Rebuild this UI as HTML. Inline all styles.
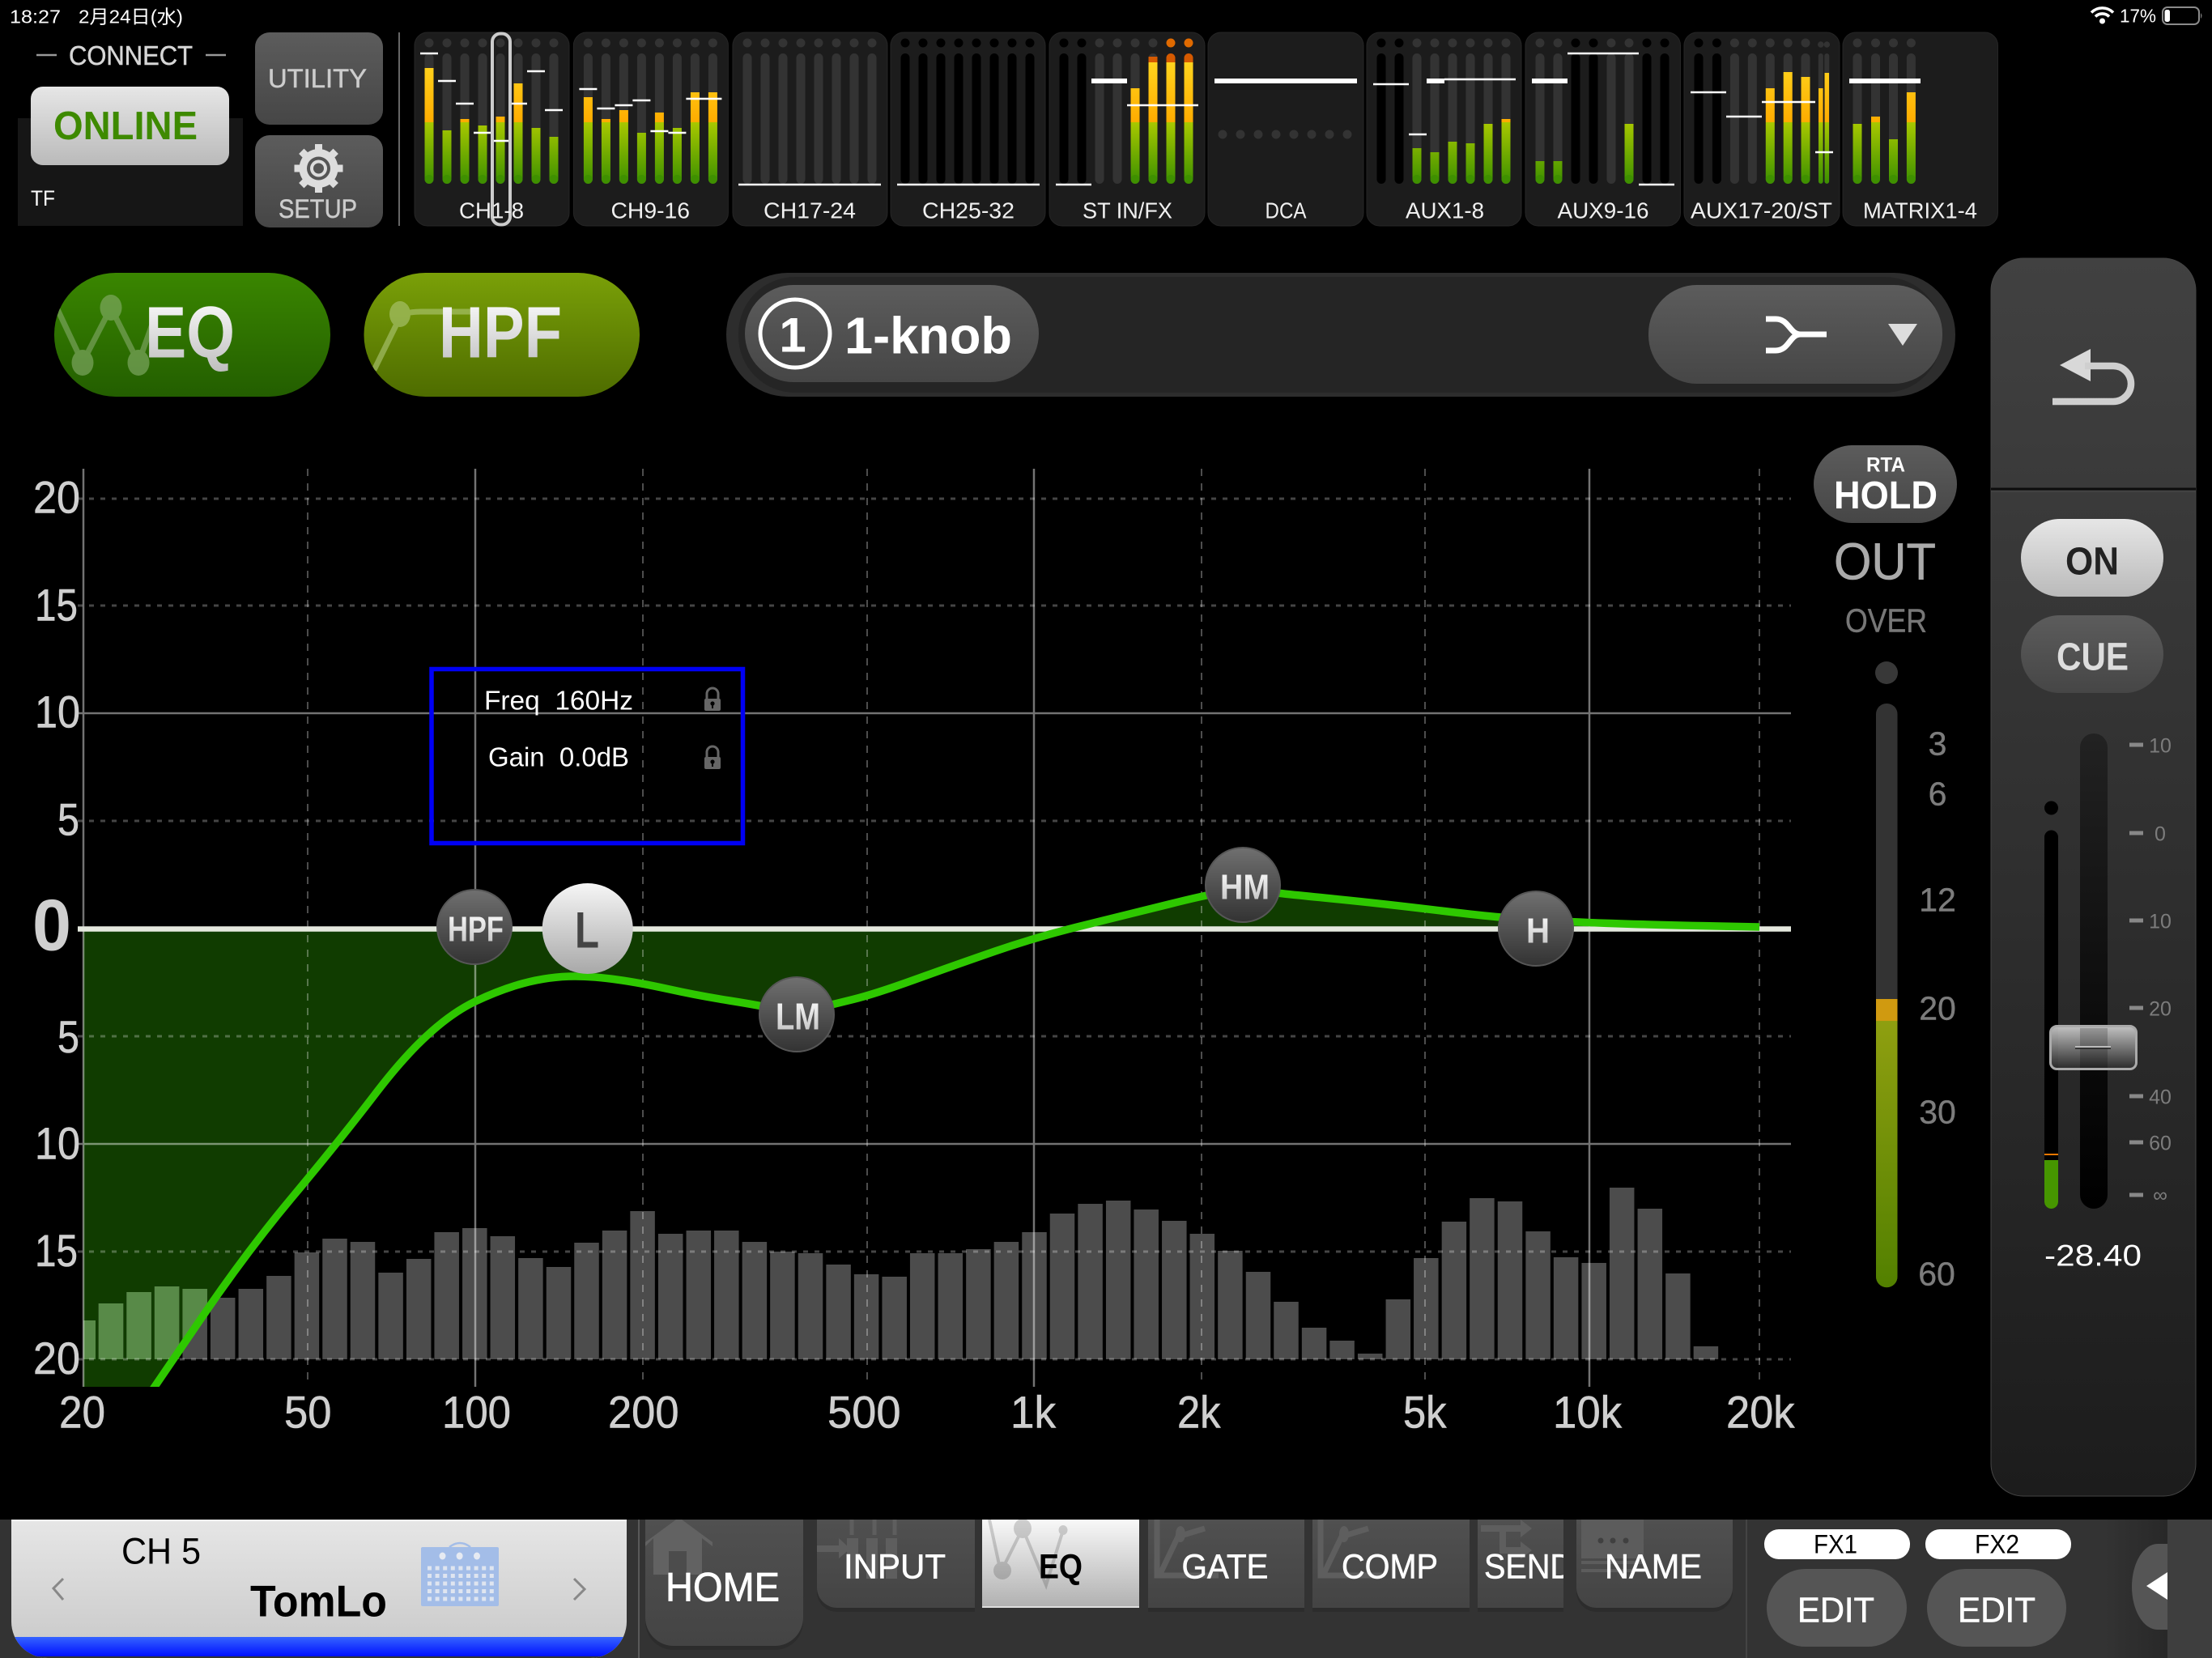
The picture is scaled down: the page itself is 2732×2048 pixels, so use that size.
<!DOCTYPE html>
<html><head><meta charset="utf-8"><title>TF Editor EQ</title>
<style>
html,body{margin:0;padding:0;background:#000;width:2732px;height:2048px;overflow:hidden}
svg{display:block}
text{font-family:"Liberation Sans","Noto Sans CJK JP",sans-serif;transform:translate(-1px,-1.5px)}
.b{font-weight:bold}
.tk{stroke-width:11;stroke-linecap:round;fill:none}
.ms{stroke-width:11;fill:none}
.f{stroke:#fff;stroke-width:2.4;fill:none}
.F{stroke:#fff;stroke-width:6;fill:none}
.pn{fill:#1c1c1c;stroke:#262626;stroke-width:1}
</style></head><body>
<svg xmlns="http://www.w3.org/2000/svg" width="2732" height="2048" viewBox="0 0 2732 2048">
<defs>
<linearGradient id="g" gradientUnits="userSpaceOnUse" x1="0" y1="151" x2="0" y2="227"><stop offset="0" stop-color="#a8c800"/><stop offset="1" stop-color="#3c9000"/></linearGradient>
<linearGradient id="y" gradientUnits="userSpaceOnUse" x1="0" y1="70" x2="0" y2="151"><stop offset="0" stop-color="#ffd820"/><stop offset="1" stop-color="#ffac00"/></linearGradient>
<linearGradient id="gb" x1="0" y1="0" x2="0" y2="1"><stop offset="0" stop-color="#5c5c5c"/><stop offset="1" stop-color="#464646"/></linearGradient>
<linearGradient id="lb" x1="0" y1="0" x2="0" y2="1"><stop offset="0" stop-color="#e6e6e6"/><stop offset="1" stop-color="#bababa"/></linearGradient>
<linearGradient id="eqb" x1="0" y1="0" x2="0" y2="1"><stop offset="0" stop-color="#3a8600"/><stop offset="1" stop-color="#235e00"/></linearGradient>
<linearGradient id="hpb" x1="0" y1="0" x2="0" y2="1"><stop offset="0" stop-color="#7aa008"/><stop offset="1" stop-color="#4e6c00"/></linearGradient>
<linearGradient id="wt" x1="0" y1="0" x2="0" y2="1"><stop offset="0" stop-color="#fff"/><stop offset="1" stop-color="#bdbdbd"/></linearGradient>
<linearGradient id="nd" x1="0" y1="0" x2="0" y2="1"><stop offset="0" stop-color="#707070"/><stop offset="1" stop-color="#333"/></linearGradient>
<linearGradient id="ln" x1="0" y1="0" x2="0" y2="1"><stop offset="0" stop-color="#f6f6f6"/><stop offset="1" stop-color="#a8a8a8"/></linearGradient>
<linearGradient id="pnl" gradientUnits="userSpaceOnUse" x1="0" y1="319" x2="0" y2="1848"><stop offset="0" stop-color="#414141"/><stop offset="1" stop-color="#1c1c1c"/></linearGradient>
<linearGradient id="ov" x1="0" y1="0" x2="0" y2="1"><stop offset="0" stop-color="#8f9f10"/><stop offset="1" stop-color="#528000"/></linearGradient>
<linearGradient id="ft" x1="0" y1="0" x2="0" y2="1"><stop offset="0" stop-color="#222"/><stop offset=".45" stop-color="#111"/><stop offset="1" stop-color="#000"/></linearGradient>
<linearGradient id="kn" x1="0" y1="0" x2="0" y2="1"><stop offset="0" stop-color="#cfcfcf"/><stop offset="1" stop-color="#2a2a2a"/></linearGradient>
<linearGradient id="wp" x1="0" y1="0" x2="0" y2="1"><stop offset="0" stop-color="#e6e6e6"/><stop offset="1" stop-color="#c8c8c8"/></linearGradient>
<linearGradient id="bl" x1="0" y1="0" x2="0" y2="1"><stop offset="0" stop-color="#3564ff"/><stop offset="1" stop-color="#0010ff"/></linearGradient>
<linearGradient id="tb" x1="0" y1="0" x2="0" y2="1"><stop offset="0" stop-color="#505050"/><stop offset="1" stop-color="#444"/></linearGradient>
<linearGradient id="eqt" x1="0" y1="0" x2="0" y2="1"><stop offset="0" stop-color="#f8f8f8"/><stop offset="1" stop-color="#b0b0b0"/></linearGradient>
<linearGradient id="sh" x1="0" y1="0" x2="1" y2="0"><stop offset="0" stop-color="#333"/><stop offset="1" stop-color="#282828"/></linearGradient>
<clipPath id="cf"><path d="M103 1147V1713H191L247.500 1630Q304 1547 360 1480Q416 1413 459.500 1356.500C490 1316 535 1262 587 1237C625 1219 665 1206 710 1206C745 1206 786 1213 824.500 1221.500Q863 1230 901 1236Q939 1242 961 1247Q983 1252 1005 1246.500Q1027 1241 1053.500 1234.500Q1080 1228 1128.500 1210.500Q1177 1193 1229 1175Q1281 1157 1340.500 1142.500Q1400 1128 1443.500 1117Q1487 1106 1511 1102Q1535 1098 1559.500 1101Q1584 1104 1645 1110Q1706 1116 1780 1125Q1854 1134 1898.500 1136.500Q1943 1139 2003 1141Q2063 1143 2173 1145V1147Z"/></clipPath>
<clipPath id="cb"><rect x="0" y="500" width="2300" height="1213"/></clipPath>
<clipPath id="ce"><rect x="67" y="337" width="341" height="153" rx="76"/></clipPath>
<clipPath id="ch"><rect x="449.5" y="337" width="340.5" height="153" rx="76"/></clipPath>
<clipPath id="cw"><path d="M14 1877H774V2003A45 45 0 0 1 729 2048H59A45 45 0 0 1 14 2003Z"/></clipPath>
<clipPath id="cs"><rect x="1825" y="1877" width="106" height="120"/></clipPath>
</defs>

<rect width="2732" height="2048" fill="#000"/>

<!-- status -->
<text x="13" y="30" font-size="23" fill="#fff" textLength="63" lengthAdjust="spacingAndGlyphs">18:27</text>
<text x="98" y="30" font-size="23" fill="#fff" textLength="129" lengthAdjust="spacingAndGlyphs">2月24日(水)</text>
<path d="M2583 15.500A19 19 0 0 1 2610 15.500M2588 20.500A12 12 0 0 1 2605 20.500" stroke="#fff" stroke-width="3.600" fill="none"/><circle cx="2596.500" cy="26" r="3.500" fill="#fff"/>
<text x="2619" y="29" font-size="23" fill="#fff" textLength="45" lengthAdjust="spacingAndGlyphs">17%</text>
<rect x="2671" y="9" width="45" height="21" rx="6" fill="none" stroke="#8a8a8a" stroke-width="2"/><rect x="2673.500" y="12" width="6.500" height="15" rx="2.500" fill="#fff"/><path d="M2718 16q3 3.500 0 7z" fill="#777"/>

<!-- connect -->
<path d="M45 68H70M254 68H279" stroke="#999" stroke-width="2.500"/>
<text x="86" y="81.500" font-size="33" fill="#d6d6d6" stroke="#d6d6d6" stroke-width=".5" textLength="153" lengthAdjust="spacingAndGlyphs">CONNECT</text>
<rect x="22" y="146" width="278" height="133" fill="#161616"/>
<rect x="38" y="107" width="245" height="97" rx="15" fill="url(#lb)"/>
<text x="67" y="173.500" font-size="49" class="b" fill="#3e8a00" textLength="178" lengthAdjust="spacingAndGlyphs">ONLINE</text>
<text x="39" y="255.500" font-size="27" fill="#fff" textLength="30" lengthAdjust="spacingAndGlyphs">TF</text>

<rect x="315" y="40" width="158" height="114" rx="18" fill="url(#gb)"/>
<text x="332" y="109.500" font-size="32" fill="#ccc" stroke="#ccc" stroke-width=".5" textLength="122" lengthAdjust="spacingAndGlyphs">UTILITY</text>
<rect x="315" y="167" width="158" height="114" rx="18" fill="url(#gb)"/>
<g fill="#ddd"><circle cx="393.500" cy="208" r="24"/>
<g stroke="#ddd" stroke-width="9"><path d="M393.500 178V238M363.500 208H423.500M372.300 186.800L414.700 229.200M414.700 186.800L372.300 229.200"/></g></g>
<circle cx="393.500" cy="208" r="14.500" fill="#555"/><circle cx="393.500" cy="208" r="10.500" fill="#ddd"/><circle cx="393.500" cy="208" r="6.500" fill="#555"/>
<text x="345" y="270.500" font-size="32" fill="#ccc" stroke="#ccc" stroke-width=".5" textLength="97" lengthAdjust="spacingAndGlyphs">SETUP</text>
<path d="M493 40V279" stroke="#666" stroke-width="2"/>

<!-- CH1-8 -->
<g transform="translate(512 0)"><rect width="191" y="40" height="239" rx="16" class="pn"/>
<path class="tk" stroke="#333" d="M18 53h0M40 53h0M62 53h0M84 53h0M106 53h0M128 53h0M150 53h0M172 53h0M18 71.500V221.500M40 71.500V221.500M62 71.500V221.500M84 71.500V221.500M106 71.500V221.500M128 71.500V221.500M150 71.500V221.500M172 71.500V221.500"/>
<path class="ms" stroke="url(#g)" d="M18 151V221.500M40 161V221.500M62 151V221.500M84 155V221.500M106 151V221.500M128 151V221.500M150 158V221.500M172 169V221.500"/>
<path class="tk" stroke="#3f9000" d="M18 221.500h0M40 221.500h0M62 221.500h0M84 221.500h0M106 221.500h0M128 221.500h0M150 221.500h0M172 221.500h0"/>
<path class="ms" stroke="url(#y)" d="M18 84V151M62 147V151M106 144V151M128 103V151"/>
<path class="f" d="M7 66h22M29 100h22M51 128h22M73 164h22M95 174h22M117 128h22M139 88h22M161 136h22"/></g>
<!-- CH9-16 -->
<g transform="translate(708.400 0)"><rect width="191" y="40" height="239" rx="16" class="pn"/>
<path class="tk" stroke="#333" d="M18 53h0M40 53h0M62 53h0M84 53h0M106 53h0M128 53h0M150 53h0M172 53h0M18 71.500V221.500M40 71.500V221.500M62 71.500V221.500M84 71.500V221.500M106 71.500V221.500M128 71.500V221.500M150 71.500V221.500M172 71.500V221.500"/>
<path class="ms" stroke="url(#g)" d="M18 151V221.500M40 151V221.500M62 151V221.500M84 164V221.500M106 151V221.500M128 158V221.500M150 151V221.500M172 151V221.500"/>
<path class="tk" stroke="#3f9000" d="M18 221.500h0M40 221.500h0M62 221.500h0M84 221.500h0M106 221.500h0M128 221.500h0M150 221.500h0M172 221.500h0"/>
<path class="ms" stroke="url(#y)" d="M18 120V151M40 147V151M62 136V151M106 139V151M150 114V151M172 114V151"/>
<path class="f" d="M7 110h22M29 134h22M51 130h22M73 124h22M95 162h22M117 164h22M139 122h44"/></g>
<!-- CH17-24 -->
<g transform="translate(905 0)"><rect width="191" y="40" height="239" rx="16" class="pn"/>
<path class="tk" stroke="#333" d="M18 53h0M40 53h0M62 53h0M84 53h0M106 53h0M128 53h0M150 53h0M172 53h0M18 71.500V221.500M40 71.500V221.500M62 71.500V221.500M84 71.500V221.500M106 71.500V221.500M128 71.500V221.500M150 71.500V221.500M172 71.500V221.500"/>
<path class="f" d="M7 228h176"/></g>
<!-- CH25-32 -->
<g transform="translate(1100 0)"><rect width="191" y="40" height="239" rx="16" class="pn"/>
<path class="tk" stroke="#000" d="M18 53h0M40 53h0M62 53h0M84 53h0M106 53h0M128 53h0M150 53h0M172 53h0M18 71.500V221.500M40 71.500V221.500M62 71.500V221.500M84 71.500V221.500M106 71.500V221.500M128 71.500V221.500M150 71.500V221.500M172 71.500V221.500"/>
<path class="f" d="M8 228h176"/></g>
<!-- ST IN/FX -->
<g transform="translate(1296 0)"><rect width="192" y="40" height="239" rx="16" class="pn"/>
<path class="tk" stroke="#000" d="M18 53h0M40 53h0M18 71.500V221.500M40 71.500V221.500"/>
<path class="tk" stroke="#333" d="M62 53h0M84 53h0M106 53h0M128 53h0M62 71.500V221.500M84 71.500V221.500M106 71.500V221.500M128 71.500V221.500"/>
<path class="tk" stroke="#e06a00" d="M150 53h0M172 53h0"/>
<path class="ms" stroke="url(#g)" d="M106 151V221.500M128 151V221.500M150 151V221.500M172 151V221.500"/>
<path class="tk" stroke="#3f9000" d="M106 221.500h0M128 221.500h0M150 221.500h0M172 221.500h0"/>
<path class="ms" stroke="url(#y)" d="M106 109V151M128 77V151M150 77V151M172 77V151"/>
<path class="ms" stroke="#d65a00" d="M128 70V77M150 71V77M172 71V77"/>
<path class="tk" stroke="#d65a00" d="M150 71.500h0M172 71.500h0"/>
<path class="f" d="M8 228h44M96 130h88"/><path class="F" d="M52 100h44"/></g>
<!-- DCA -->
<g transform="translate(1492 0)"><rect width="192" y="40" height="239" rx="16" class="pn"/>
<path class="tk" stroke="#333" d="M18 166h0M40 166h0M62 166h0M84 166h0M106 166h0M128 166h0M150 166h0M172 166h0"/>
<path class="F" d="M8 100h176"/></g>
<!-- AUX1-8 -->
<g transform="translate(1688 0)"><rect width="191" y="40" height="239" rx="16" class="pn"/>
<path class="tk" stroke="#000" d="M18 53h0M40 53h0M18 71.500V221.500M40 71.500V221.500"/>
<path class="tk" stroke="#333" d="M62 53h0M84 53h0M106 53h0M128 53h0M150 53h0M172 53h0M62 71.500V221.500M84 71.500V221.500M106 71.500V221.500M128 71.500V221.500M150 71.500V221.500M172 71.500V221.500"/>
<path class="ms" stroke="url(#g)" d="M62 183V221.500M84 188V221.500M106 175V221.500M128 177V221.500M150 153V221.500M172 151V221.500"/>
<path class="tk" stroke="#3f9000" d="M62 221.500h0M84 221.500h0M106 221.500h0M128 221.500h0M150 221.500h0M172 221.500h0"/>
<path class="ms" stroke="url(#y)" d="M172 147V151"/>
<path class="f" d="M8 104h44M52 166h22M96 98h88"/><path class="F" d="M74 100h22"/></g>
<!-- AUX9-16 -->
<g transform="translate(1884 0)"><rect width="191.500" y="40" height="239" rx="16" class="pn"/>
<path class="tk" stroke="#000" d="M62 53h0M84 53h0M150 53h0M172 53h0M62 71.500V221.500M84 71.500V221.500M150 71.500V221.500M172 71.500V221.500"/>
<path class="tk" stroke="#333" d="M18 53h0M40 53h0M106 53h0M128 53h0M18 71.500V221.500M40 71.500V221.500M106 71.500V221.500M128 71.500V221.500"/>
<path class="ms" stroke="url(#g)" d="M18 199V221.500M40 199V221.500M128 153V221.500"/>
<path class="tk" stroke="#3f9000" d="M18 221.500h0M40 221.500h0M128 221.500h0"/>
<path class="f" d="M52 66h88M140 228h44"/><path class="F" d="M8 100h44"/></g>
<!-- AUX17-20/ST -->
<g transform="translate(2080 0)"><rect width="192" y="40" height="239" rx="16" class="pn"/>
<path class="tk" stroke="#000" d="M18 53h0M40.400 53h0M18 71.500V221.500M40.400 71.500V221.500"/>
<path class="tk" stroke="#333" d="M62.400 53h0M84.300 53h0M106.300 53h0M128.200 53h0M150 53h0M62.400 71.500V221.500M84.300 71.500V221.500M106.300 71.500V221.500M128.200 71.500V221.500M150 71.500V221.500"/>
<path stroke="#333" stroke-width="6" stroke-linecap="round" fill="none" d="M168.800 69V224M176.300 69V224"/>
<path stroke="#333" stroke-width="7.500" stroke-linecap="round" fill="none" d="M168.800 55h0M176.300 55h0"/>
<path class="ms" stroke="url(#g)" d="M106.300 151V221.500M128.200 151V221.500M150 151V221.500"/>
<path class="tk" stroke="#3f9000" d="M106.300 221.500h0M128.200 221.500h0M150 221.500h0"/>
<path stroke="url(#g)" stroke-width="5.500" fill="none" stroke-linecap="round" d="M168.800 151V224M176.300 151V224"/>
<path class="ms" stroke="url(#y)" d="M106.300 109V151M128.200 89V151M150 95V151"/>
<path stroke="url(#y)" stroke-width="5.500" fill="none" d="M168.800 109V151M176.300 90V151"/>
<path class="f" d="M8 114h44M52 144h44M96 126h66M162 188h22"/></g>
<!-- MATRIX -->
<g transform="translate(2276 0)"><rect width="191.500" y="40" height="239" rx="16" class="pn"/>
<path class="tk" stroke="#333" d="M18 53h0M40.500 53h0M62.500 53h0M84.400 53h0M18 71.500V221.500M40.500 71.500V221.500M62.500 71.500V221.500M84.400 71.500V221.500"/>
<path class="ms" stroke="url(#g)" d="M18 153V221.500M40.500 151V221.500M62.500 172V221.500M84.400 151V221.500"/>
<path class="tk" stroke="#3f9000" d="M18 221.500h0M40.500 221.500h0M62.500 221.500h0M84.400 221.500h0"/>
<path class="ms" stroke="url(#y)" d="M40.500 144V151M84.400 114V151"/>
<path class="F" d="M8 100h88"/></g>
<rect x="608" y="41.500" width="22" height="236" rx="10" fill="none" stroke="#ccc" stroke-width="4"/>

<g font-size="28" fill="#f0f0f0">
<text x="568" y="271" textLength="80" lengthAdjust="spacingAndGlyphs">CH1-8</text>
<text x="755.500" y="271" textLength="97.500" lengthAdjust="spacingAndGlyphs">CH9-16</text>
<text x="944" y="271" textLength="114" lengthAdjust="spacingAndGlyphs">CH17-24</text>
<text x="1140" y="271" textLength="114" lengthAdjust="spacingAndGlyphs">CH25-32</text>
<text x="1338" y="271" textLength="111" lengthAdjust="spacingAndGlyphs">ST IN/FX</text>
<text x="1563.500" y="271" textLength="51" lengthAdjust="spacingAndGlyphs">DCA</text>
<text x="1737" y="271" textLength="97" lengthAdjust="spacingAndGlyphs">AUX1-8</text>
<text x="1924.500" y="271" textLength="113" lengthAdjust="spacingAndGlyphs">AUX9-16</text>
<text x="2089" y="271" textLength="175" lengthAdjust="spacingAndGlyphs">AUX17-20/ST</text>
<text x="2302" y="271" textLength="141" lengthAdjust="spacingAndGlyphs">MATRIX1-4</text>
</g>

<!-- EQ / HPF buttons -->
<rect x="67" y="337" width="341" height="153" rx="76" fill="url(#eqb)"/>
<g clip-path="url(#ce)" fill="#8ab070" opacity=".6"><path d="M70 380L102 448L137 380L171 448L190 395" stroke="#86aa6c" stroke-width="7" fill="none"/><ellipse cx="102" cy="448" rx="13.500" ry="16"/><ellipse cx="137" cy="380" rx="13.500" ry="16"/><ellipse cx="171" cy="448" rx="13.500" ry="16"/></g>
<text x="180" y="443" font-size="90" class="b" fill="url(#wt)" textLength="111" lengthAdjust="spacingAndGlyphs">EQ</text>
<rect x="449.500" y="337" width="340.500" height="153" rx="76" fill="url(#hpb)"/>
<g clip-path="url(#ch)" opacity=".6"><path d="M462 457L494 392Q500 385 520 385H585" stroke="#b0c878" stroke-width="7" fill="none"/><ellipse cx="494" cy="388" rx="13" ry="16" fill="#b0c878"/></g>
<text x="543" y="443" font-size="90" class="b" fill="url(#wt)" textLength="152" lengthAdjust="spacingAndGlyphs">HPF</text>

<!-- 1-knob bar -->
<rect x="897" y="337" width="1518" height="153" rx="76" fill="#2d2d2d"/>
<rect x="912" y="342" width="1486" height="143" rx="70" fill="#252525"/>
<rect x="920" y="352" width="363" height="120" rx="60" fill="url(#gb)"/>
<ellipse cx="982" cy="412" rx="43" ry="42" fill="none" stroke="#fff" stroke-width="5"/>
<text x="980" y="436" font-size="60" class="b" fill="#fff" text-anchor="middle">1</text>
<text x="1044" y="438" font-size="64" class="b" fill="#fff" textLength="207" lengthAdjust="spacingAndGlyphs">1-knob</text>
<rect x="2036" y="352" width="363" height="122" rx="60" fill="url(#gb)"/>
<path d="M2181 394H2193C2210 394 2210 413 2224 413H2256M2181 433H2193C2210 433 2210 413 2224 413" fill="none" stroke="#fff" stroke-width="7"/>
<path d="M2332 400H2368L2350 427Z" fill="#ddd"/>

<!-- graph -->
<path d="M103 1147V1713H191L247.500 1630Q304 1547 360 1480Q416 1413 459.500 1356.500C490 1316 535 1262 587 1237C625 1219 665 1206 710 1206C745 1206 786 1213 824.500 1221.500Q863 1230 901 1236Q939 1242 961 1247Q983 1252 1005 1246.500Q1027 1241 1053.500 1234.500Q1080 1228 1128.500 1210.500Q1177 1193 1229 1175Q1281 1157 1340.500 1142.500Q1400 1128 1443.500 1117Q1487 1106 1511 1102Q1535 1098 1559.500 1101Q1584 1104 1645 1110Q1706 1116 1780 1125Q1854 1134 1898.500 1136.500Q1943 1139 2003 1141Q2063 1143 2173 1145V1147Z" fill="#103c00"/>
<path fill="none" stroke="#4c4c4c" stroke-width="30.500" d="M137 1679V1610M171.600 1679V1596M206.100 1679V1589M240.700 1679V1592M275.200 1679V1603M309.800 1679V1592M344.400 1679V1576M378.900 1679V1547M413.500 1679V1530M448 1679V1534M482.600 1679V1572M517.200 1679V1555M551.700 1679V1522M586.300 1679V1517M620.800 1679V1527M655.400 1679V1554M690 1679V1565M724.500 1679V1535M759.100 1679V1520M793.600 1679V1496M828.200 1679V1524M862.800 1679V1520M897.300 1679V1520M931.900 1679V1534M966.400 1679V1546M1001 1679V1548M1035.600 1679V1562M1070.100 1679V1574M1104.700 1679V1577M1139.200 1679V1548M1173.800 1679V1548M1208.400 1679V1543M1242.900 1679V1534M1277.500 1679V1522M1312 1679V1499M1346.600 1679V1487M1381.200 1679V1483M1415.700 1679V1494M1450.300 1679V1508M1484.800 1679V1524M1519.400 1679V1545M1554 1679V1571M1588.500 1679V1608M1623.100 1679V1640M1657.600 1679V1656M1692.200 1679V1672M1726.800 1679V1605M1761.300 1679V1554M1795.900 1679V1509M1830.400 1679V1480M1865 1679V1484M1899.600 1679V1521M1934.100 1679V1553M1968.700 1679V1560M2003.200 1679V1467M2037.800 1679V1493M2072.400 1679V1573M2106.900 1679V1663"/>
<g clip-path="url(#cf)"><path fill="none" stroke="#588a48" stroke-width="30.500" d="M137 1679V1610M171.600 1679V1596M206.100 1679V1589M240.700 1679V1592"/><rect x="103" y="1631" width="15" height="48" fill="#588a48"/></g>
<path fill="none" stroke="#fff" stroke-opacity=".27" stroke-width="3" stroke-dasharray="6 8" d="M96 616H2212M96 748H2212M96 1014H2212M96 1280H2212M96 1546H2212M96 1679H2212"/>
<path fill="none" stroke="#fff" stroke-opacity=".3" stroke-width="2" stroke-dasharray="9 9" d="M380 579V1713M794 579V1713M1071 579V1713M1484 579V1713M1760 579V1713M2173 579V1713"/>
<path fill="none" stroke="#fff" stroke-opacity=".45" stroke-width="2.500" d="M96 881H2212M96 1413H2212M103 579V1713M587 579V1713M1277 579V1713M1963 579V1713"/>
<path d="M96 1147.500H2212" stroke="#e4e8de" stroke-width="6.500"/>
<path clip-path="url(#cb)" fill="none" stroke="#2ec800" stroke-width="9.500" d="M180 1729L247.500 1630Q304 1547 360 1480Q416 1413 459.500 1356.500C490 1316 535 1262 587 1237C625 1219 665 1206 710 1206C745 1206 786 1213 824.500 1221.500Q863 1230 901 1236Q939 1242 961 1247Q983 1252 1005 1246.500Q1027 1241 1053.500 1234.500Q1080 1228 1128.500 1210.500Q1177 1193 1229 1175Q1281 1157 1340.500 1142.500Q1400 1128 1443.500 1117Q1487 1106 1511 1102Q1535 1098 1559.500 1101Q1584 1104 1645 1110Q1706 1116 1780 1125Q1854 1134 1898.500 1136.500Q1943 1139 2003 1141Q2063 1143 2173 1145"/>

<g font-size="56" fill="#cfcfcf" stroke="#cfcfcf" stroke-width=".6">
<text x="42" y="635" textLength="58" lengthAdjust="spacingAndGlyphs">20</text>
<text x="44" y="768" textLength="53" lengthAdjust="spacingAndGlyphs">15</text>
<text x="44" y="900" textLength="56" lengthAdjust="spacingAndGlyphs">10</text>
<text x="72" y="1033" textLength="27" lengthAdjust="spacingAndGlyphs">5</text>
<text x="72" y="1301.500" textLength="27" lengthAdjust="spacingAndGlyphs">5</text>
<text x="44" y="1433" textLength="56" lengthAdjust="spacingAndGlyphs">10</text>
<text x="44" y="1565.500" textLength="53" lengthAdjust="spacingAndGlyphs">15</text>
<text x="42" y="1698.500" textLength="58" lengthAdjust="spacingAndGlyphs">20</text>
<text x="74" y="1765" textLength="57" lengthAdjust="spacingAndGlyphs">20</text>
<text x="352" y="1765" textLength="58.500" lengthAdjust="spacingAndGlyphs">50</text>
<text x="547" y="1765" textLength="85" lengthAdjust="spacingAndGlyphs">100</text>
<text x="752" y="1765" textLength="87.500" lengthAdjust="spacingAndGlyphs">200</text>
<text x="1023" y="1765" textLength="90.500" lengthAdjust="spacingAndGlyphs">500</text>
<text x="1249" y="1765" textLength="56" lengthAdjust="spacingAndGlyphs">1k</text>
<text x="1455" y="1765" textLength="53.500" lengthAdjust="spacingAndGlyphs">2k</text>
<text x="1734" y="1765" textLength="53.500" lengthAdjust="spacingAndGlyphs">5k</text>
<text x="1919" y="1765" textLength="85" lengthAdjust="spacingAndGlyphs">10k</text>
<text x="2133" y="1765" textLength="84.500" lengthAdjust="spacingAndGlyphs">20k</text>
</g>
<text x="41" y="1175" font-size="90" class="b" fill="#cfcfcf" textLength="48" lengthAdjust="spacingAndGlyphs">0</text>

<!-- blue box -->
<rect x="533" y="826.500" width="384.500" height="215" fill="none" stroke="#0000f4" stroke-width="5.500"/>
<text x="599" y="878" font-size="33" fill="#fff" textLength="184" lengthAdjust="spacingAndGlyphs" xml:space="preserve">Freq  160Hz</text>
<text x="604" y="948" font-size="33" fill="#fff" textLength="174" lengthAdjust="spacingAndGlyphs" xml:space="preserve">Gain  0.0dB</text>
<g><path d="M873 864V857a7 7 0 0 1 14 0V864" fill="none" stroke="#666" stroke-width="3"/><rect x="870" y="863" width="20" height="15" rx="2" fill="#666"/><circle cx="880" cy="869" r="2.600" fill="#000"/><rect x="879" y="870" width="2" height="5" fill="#000"/></g>
<g transform="translate(0 72)"><path d="M873 864V857a7 7 0 0 1 14 0V864" fill="none" stroke="#666" stroke-width="3"/><rect x="870" y="863" width="20" height="15" rx="2" fill="#666"/><circle cx="880" cy="869" r="2.600" fill="#000"/><rect x="879" y="870" width="2" height="5" fill="#000"/></g>

<!-- nodes -->
<g stroke="#565656" stroke-width="2">
<circle cx="586" cy="1145" r="46" fill="url(#nd)"/>
<circle cx="984" cy="1253" r="46" fill="url(#nd)"/>
<circle cx="1535" cy="1093" r="46" fill="url(#nd)"/>
<circle cx="1897" cy="1147" r="46" fill="url(#nd)"/>
</g>
<circle cx="725.700" cy="1147" r="56" fill="url(#ln)"/>
<g class="b" fill="url(#wt)">
<text x="554" y="1164" font-size="44" class="b" textLength="69" lengthAdjust="spacingAndGlyphs">HPF</text>
<text x="959" y="1273" font-size="46" class="b" textLength="55" lengthAdjust="spacingAndGlyphs">LM</text>
<text x="1508" y="1112" font-size="44" class="b" textLength="61" lengthAdjust="spacingAndGlyphs">HM</text>
<text x="1886" y="1166" font-size="44" class="b" textLength="29" lengthAdjust="spacingAndGlyphs">H</text>
</g>
<text x="711" y="1172" font-size="63" class="b" fill="#444" textLength="30" lengthAdjust="spacingAndGlyphs">L</text>

<!-- RTA / OUT -->
<rect x="2240" y="550" width="177" height="96" rx="48" fill="url(#gb)"/>
<text x="2306" y="584" font-size="25" class="b" fill="#fff" textLength="48" lengthAdjust="spacingAndGlyphs">RTA</text>
<text x="2266" y="629.500" font-size="48" class="b" fill="#fff" textLength="128" lengthAdjust="spacingAndGlyphs">HOLD</text>
<text x="2266" y="717" font-size="64" fill="#aaa" stroke="#aaa" stroke-width=".6" textLength="126" lengthAdjust="spacingAndGlyphs">OUT</text>
<text x="2280" y="782" font-size="41" fill="#777" stroke="#777" stroke-width=".4" textLength="101" lengthAdjust="spacingAndGlyphs">OVER</text>
<circle cx="2330" cy="831" r="14" fill="#383838"/>
<rect x="2317" y="869" width="26.500" height="721" rx="13" fill="#333"/>
<path d="M2317 1234h26.500v27h-26.500z" fill="#d09a10"/>
<path d="M2317 1261h26.500V1577a13 13 0 0 1-26.500 0z" fill="url(#ov)"/>
<g font-size="41" fill="#7c7c7c" text-anchor="middle" stroke="#7c7c7c" stroke-width=".4">
<text x="2394" y="934">3</text>
<text x="2394" y="996">6</text>
<text x="2394" y="1127">12</text>
<text x="2394" y="1261">20</text>
<text x="2394" y="1389">30</text>
<text x="2393" y="1589">60</text>
</g>

<!-- right panel -->
<rect x="2459" y="319" width="253" height="1529" rx="40" fill="url(#pnl)" stroke="#454545" stroke-width="1"/>
<path d="M2459 604H2712" stroke="#0c0c0c" stroke-width="3"/><path d="M2459 607H2712" stroke="#4a4a4a" stroke-width="1"/>
<path d="M2544 451L2582 431V471Z" fill="#d8d8d8"/>
<path d="M2575 452H2610A22 22 0 0 1 2632 474A22 22 0 0 1 2610 496H2535" fill="none" stroke="#cfcfcf" stroke-width="8.500"/>
<rect x="2496" y="641" width="176" height="96" rx="48" fill="url(#lb)"/>
<text x="2552" y="711" font-size="48" class="b" fill="#222" textLength="66" lengthAdjust="spacingAndGlyphs">ON</text>
<rect x="2496" y="760" width="176" height="96" rx="48" fill="url(#gb)"/>
<text x="2541" y="829" font-size="48" class="b" fill="#ddd" textLength="89" lengthAdjust="spacingAndGlyphs">CUE</text>
<circle cx="2533.500" cy="998" r="8.500" fill="#000"/>
<path d="M2525 1034a8.500 8.500 0 0 1 17 0V1484.500a8.500 8.500 0 0 1-17 0z" fill="#000"/>
<path d="M2525 1433h17V1484.500a8.500 8.500 0 0 1-17 0z" fill="#469600"/>
<rect x="2525" y="1425" width="17" height="2" fill="#f07800"/>
<rect x="2569" y="906" width="34" height="587" rx="17" fill="url(#ft)"/>
<g fill="#888"><rect x="2630" y="917.500" width="17" height="5"/><rect x="2630" y="1026.500" width="17" height="5"/><rect x="2630" y="1134.500" width="17" height="5"/><rect x="2630" y="1242.500" width="17" height="5"/><rect x="2630" y="1351.500" width="17" height="5"/><rect x="2630" y="1408.500" width="17" height="5"/><rect x="2630" y="1473.500" width="17" height="5"/></g>
<g font-size="25" fill="#7c7c7c" text-anchor="middle">
<text x="2669" y="931">10</text><text x="2669" y="1040">0</text><text x="2669" y="1148">10</text><text x="2669" y="1256">20</text><text x="2669" y="1365">40</text><text x="2669" y="1422">60</text><text x="2669" y="1486">∞</text>
</g>
<rect x="2532.500" y="1267.500" width="106" height="53" rx="8" fill="url(#kn)" fill-opacity=".92" stroke="#aaa" stroke-width="3"/>
<path d="M2569 1270h34v49h-34z" fill="#000" opacity=".18"/>
<path d="M2563 1293H2607" stroke="#bbb" stroke-width="2"/><path d="M2563 1295H2607" stroke="#222" stroke-width="1.500"/>
<text x="2526" y="1565" font-size="37" fill="#fff" textLength="120" lengthAdjust="spacingAndGlyphs">-28.40</text>

<!-- bottom bar -->
<rect x="0" y="1877" width="2732" height="171" fill="#333"/>
<path d="M14 1877H774V2003A45 45 0 0 1 729 2048H59A45 45 0 0 1 14 2003Z" fill="url(#wp)"/>
<rect x="14" y="1877" width="760" height="2" fill="#f6f6f6"/>
<g clip-path="url(#cw)"><rect x="14" y="2022" width="760" height="24" fill="url(#bl)"/><rect x="14" y="2046" width="760" height="2" fill="#333"/></g>
<text x="151" y="1933" font-size="45" fill="#000" textLength="98" lengthAdjust="spacingAndGlyphs">CH 5</text>
<text x="310" y="1998" font-size="55" class="b" fill="#000" textLength="169" lengthAdjust="spacingAndGlyphs">TomLo</text>
<path d="M78 1950L66 1962L78 1976" fill="none" stroke="#888" stroke-width="3"/><path d="M709 1950L722 1963L709 1976" fill="none" stroke="#888" stroke-width="3"/>
<rect x="520" y="1911" width="96" height="73" rx="2" fill="#a3bde8"/>
<path d="M555 1911q13-10 26 0" fill="none" stroke="#a3bde8" stroke-width="2.500"/>
<g fill="#e6eaf2"><ellipse cx="546.500" cy="1922" rx="4" ry="4.500"/><ellipse cx="567.600" cy="1922" rx="4" ry="4.500"/><ellipse cx="589" cy="1922" rx="4" ry="4.500"/></g>
<path fill="none" stroke="#dfe5f0" stroke-width="5" stroke-dasharray="5 4.600" d="M528 1937H612M528 1946.500H612M528 1956H612M528 1965.500H612M528 1975H612"/>
<path d="M789 1877V2048" stroke="#666" stroke-width="1.500"/>

<path d="M797 1881H992V2003A35 35 0 0 1 957 2038H832A35 35 0 0 1 797 2003Z" fill="#2c2c2c"/>
<path d="M797 1877H992V1998A35 35 0 0 1 957 2033H832A35 35 0 0 1 797 1998Z" fill="url(#tb)"/>
<path d="M797 1905L835 1877H842L880 1905V1910L867 1900V1945H807V1900L797 1910Z" fill="#626262"/><rect x="826" y="1916" width="22" height="29" fill="#4c4c4c"/>
<text x="823" y="1979" font-size="50" fill="#fff" stroke="#fff" stroke-width=".8" textLength="141" lengthAdjust="spacingAndGlyphs">HOME</text>

<path d="M1009 1882H1204V1991H1034A25 25 0 0 1 1009 1966Z" fill="#2c2c2c"/>
<path d="M1009 1877H1204V1986H1034A25 25 0 0 1 1009 1961Z" fill="url(#tb)"/>
<path d="M1052 1877V1896M1080 1877V1896M1105 1877V1896" stroke="#5e5e5e" stroke-width="5"/>
<path d="M1009 1909H1036V1900L1050 1913L1036 1925V1917H1009Z M1046 1900H1060V1950H1046ZM1070 1900H1084V1950H1070ZM1094 1900H1108V1950H1094Z" fill="#5e5e5e"/>
<text x="1043" y="1951" font-size="43" fill="#fff" stroke="#fff" stroke-width=".6" textLength="126" lengthAdjust="spacingAndGlyphs">INPUT</text>

<rect x="1213" y="1877" width="194" height="109" fill="url(#eqt)"/><rect x="1213" y="1984" width="194" height="2" fill="#ddd"/>
<g opacity=".16"><path d="M1222 1877L1236 1942L1263 1888L1292 1958L1313 1890" fill="none" stroke="#000" stroke-width="4"/>
<g fill="#000"><ellipse cx="1238" cy="1940" rx="11" ry="11"/><ellipse cx="1263" cy="1888" rx="11" ry="12"/><ellipse cx="1313" cy="1890" rx="5.500" ry="6"/></g></g>
<text x="1284" y="1951" font-size="43" class="b" fill="#000" textLength="54" lengthAdjust="spacingAndGlyphs">EQ</text>

<rect x="1418" y="1882" width="193" height="109" fill="#2c2c2c"/><rect x="1418" y="1877" width="193" height="109" fill="url(#tb)"/>
<path d="M1429 1877V1946H1505M1432 1946L1455 1898L1488 1888" fill="none" stroke="#5e5e5e" stroke-width="7"/><ellipse cx="1458" cy="1895" rx="6" ry="10" fill="#5e5e5e"/>
<text x="1460.500" y="1951" font-size="43" fill="#fff" stroke="#fff" stroke-width=".6" textLength="107" lengthAdjust="spacingAndGlyphs">GATE</text>

<rect x="1621" y="1882" width="194" height="109" fill="#2c2c2c"/><rect x="1621" y="1877" width="194" height="109" fill="url(#tb)"/>
<path d="M1631 1877V1946H1707M1634 1946L1657 1898L1690 1888" fill="none" stroke="#5e5e5e" stroke-width="7"/><ellipse cx="1660" cy="1895" rx="6" ry="10" fill="#5e5e5e"/>
<text x="1658" y="1951" font-size="43" fill="#fff" stroke="#fff" stroke-width=".6" textLength="119" lengthAdjust="spacingAndGlyphs">COMP</text>

<rect x="1825" y="1882" width="106" height="109" fill="#2c2c2c"/><rect x="1825" y="1877" width="106" height="109" fill="url(#tb)"/>
<path d="M1829 1884H1878V1877L1892 1888L1878 1899V1892H1860V1911H1878V1904L1892 1915L1878 1926V1919H1852V1892H1829Z" fill="#5e5e5e"/>
<g clip-path="url(#cs)"><text x="1834" y="1951" font-size="43" fill="#fff" stroke="#fff" stroke-width=".6" textLength="110" lengthAdjust="spacingAndGlyphs">SEND</text></g>

<path d="M1947 1882H2140V1966A25 25 0 0 1 2115 1991H1972A25 25 0 0 1 1947 1966Z" fill="#2c2c2c"/>
<path d="M1947 1877H2140V1961A25 25 0 0 1 2115 1986H1972A25 25 0 0 1 1947 1961Z" fill="url(#tb)"/>
<rect x="1953" y="1877" width="77" height="48" fill="#5c5c5c"/><rect x="1953" y="1928" width="77" height="4" fill="#5c5c5c"/><rect x="1953" y="1938" width="77" height="4" fill="#5c5c5c"/>
<g fill="#404040"><circle cx="1977" cy="1903" r="3.500"/><circle cx="1992" cy="1903" r="3.500"/><circle cx="2008" cy="1903" r="3.500"/></g>
<text x="1983" y="1951" font-size="43" fill="#fff" stroke="#fff" stroke-width=".6" textLength="120" lengthAdjust="spacingAndGlyphs">NAME</text>

<path d="M2157 1877V2048" stroke="#555" stroke-width="1"/>
<rect x="2179" y="1889" width="180" height="37" rx="18" fill="#fff"/>
<text x="2241" y="1920" font-size="32" fill="#000" textLength="54" lengthAdjust="spacingAndGlyphs">FX1</text>
<rect x="2378" y="1889" width="180" height="37" rx="18" fill="#fff"/>
<text x="2440" y="1920" font-size="32" fill="#000" textLength="55" lengthAdjust="spacingAndGlyphs">FX2</text>
<rect x="2182" y="1938" width="173" height="96" rx="48" fill="#555"/>
<text x="2221" y="2005" font-size="44" fill="#fff" stroke="#fff" stroke-width=".6" textLength="95" lengthAdjust="spacingAndGlyphs">EDIT</text>
<rect x="2380" y="1938" width="172" height="96" rx="48" fill="#555"/>
<text x="2419" y="2005" font-size="44" fill="#fff" stroke="#fff" stroke-width=".6" textLength="96" lengthAdjust="spacingAndGlyphs">EDIT</text>
<rect x="2600" y="1877" width="77" height="171" fill="url(#sh)"/>
<path d="M2677 1907H2665A32 53 0 0 0 2633 1960A32 53 0 0 0 2665 2013H2677Z" fill="#555"/>
<path d="M2651 1959L2677 1942V1976Z" fill="#fff"/>
<rect x="2677" y="1877" width="55" height="171" fill="#3e3e3e"/>
</svg>
</body></html>
